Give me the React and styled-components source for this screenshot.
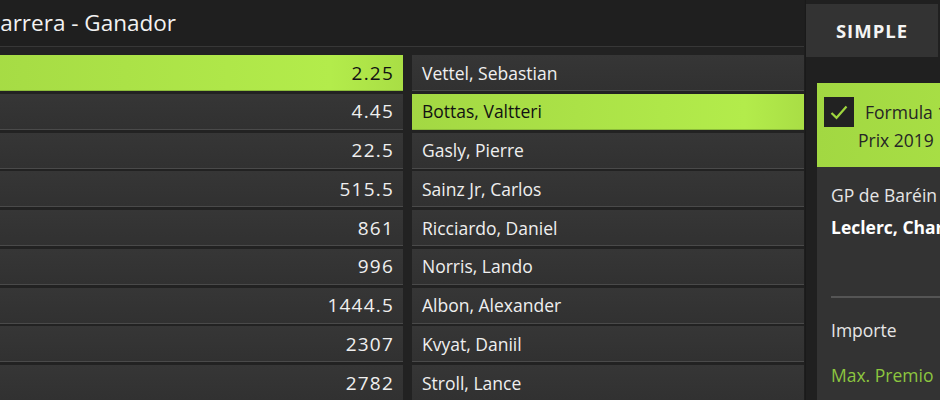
import React from "react";
import styled, { createGlobalStyle } from "styled-components";

const GlobalStyle = createGlobalStyle`
  html, body {
    margin: 0;
    padding: 0;
    background: #1e1e1e;
    overflow: hidden;
  }
  body {
    font-family: "Open Sans", "Noto Sans", sans-serif;
    color: #ededed;
  }
`;

const runners = [
  { odds: "2.25", name: "Vettel, Sebastian", oddsOn: true },
  { odds: "4.45", name: "Bottas, Valtteri", nameOn: true },
  { odds: "22.5", name: "Gasly, Pierre" },
  { odds: "515.5", name: "Sainz Jr, Carlos" },
  { odds: "861", name: "Ricciardo, Daniel" },
  { odds: "996", name: "Norris, Lando" },
  { odds: "1444.5", name: "Albon, Alexander" },
  { odds: "2307", name: "Kvyat, Daniil" },
  { odds: "2782", name: "Stroll, Lance" },
];

function App() {
  return (
    <>
      <GlobalStyle />
      <Page>
        <Market>
          <MarketHeader>
            <Title>Carrera - Ganador</Title>
          </MarketHeader>
          <Grid>
            {runners.map((r) => (
              <React.Fragment key={r.name}>
                <Cell $active={r.oddsOn} $odds>
                  {r.odds}
                </Cell>
                <Cell $active={r.nameOn}>{r.name}</Cell>
              </React.Fragment>
            ))}
          </Grid>
        </Market>
        <Sidebar>
          <Tabs>
            <Tab>SIMPLE</Tab>
            <Tab>MÚLTIPLE</Tab>
          </Tabs>
          <SlipArea>
            <BetCard>
              <BetHead>
                <Check>
                  <svg width="18" height="15" viewBox="0 0 18 15">
                    <path
                      d="M1.5 8 L6.5 12.8 L16.5 1.5"
                      fill="none"
                      stroke="#9fd63e"
                      strokeWidth="2.2"
                    />
                  </svg>
                </Check>
                <EventName>Formula 1 - Gran Prix 2019</EventName>
              </BetHead>
              <BetBody>
                <Market2>GP de Baréin</Market2>
                <Pick>Leclerc, Charles</Pick>
                <Divider />
                <Label>Importe</Label>
                <Premium>Max. Premio</Premium>
              </BetBody>
            </BetCard>
          </SlipArea>
        </Sidebar>
      </Page>
    </>
  );
}

const Page = styled.div`
  display: flex;
  align-items: flex-start;
  margin-left: -80px;
  width: 1200px;
  height: 400px;
`;

const Market = styled.section`
  width: 884px;
  flex: none;
  background: #222;
  height: 100%;
`;

const MarketHeader = styled.header`
  height: 47px;
  background: #1f1f1f;
  border-bottom: 1px solid #373737;
  display: flex;
  align-items: center;
  padding-left: 66px;
  box-sizing: border-box;
`;

const Title = styled.h2`
  margin: 0;
  font-size: 22.5px;
  font-weight: 400;
  color: #f2f2f2;
  position: relative;
  top: -1px;
`;

const Grid = styled.div`
  display: grid;
  grid-template-columns: 1fr 392px;
  column-gap: 9px;
  row-gap: 2.75px;
  padding-top: 8px;
`;

const Cell = styled.div`
  height: 36px;
  box-sizing: border-box;
  display: flex;
  align-items: center;
  justify-content: ${(p) => (p.$odds ? "flex-end" : "flex-start")};
  padding: 0 ${(p) => (p.$odds ? "9px" : "10px")};
  font-size: ${(p) => (p.$odds ? "19px" : "17.5px")};
  letter-spacing: ${(p) => (p.$odds ? "1.2px" : "0")};
  color: ${(p) => (p.$active ? "#121212" : "#efefef")};
  background: ${(p) =>
    p.$active
      ? "linear-gradient(90deg, #a3d843 0%, #b3ec4b 85%, #a9de45 100%)"
      : "linear-gradient(180deg, #363636, #313131)"};
  border-bottom: 1.5px solid ${(p) => (p.$active ? "#8cbc3a" : "#4a4a4a")};
`;

const Sidebar = styled.aside`
  flex: none;
  width: 300px;
  margin-left: 1px;
  height: 100%;
  background: #202020;
  border-left: 1px solid #1a1a1a;
  padding-top: 4px;
  box-sizing: border-box;
`;

const Tabs = styled.div`
  display: flex;
  gap: 3px;
`;

const Tab = styled.div`
  width: 132px;
  height: 53px;
  display: flex;
  align-items: center;
  justify-content: center;
  background: #333;
  color: #f4f4f4;
  font-weight: 700;
  font-size: 18.5px;
  letter-spacing: 1px;
`;

const SlipArea = styled.div`
  padding: 26px 0 0 11px;
`;

const BetCard = styled.div`
  background: #333;
  height: 320px;
`;

const BetHead = styled.div`
  background: linear-gradient(90deg, #a2d842, #aee648);
  height: 84px;
  padding: 14px 0 0 7px;
  box-sizing: border-box;
  display: flex;
  align-items: flex-start;
  gap: 4px;
`;

const Check = styled.div`
  width: 30px;
  height: 30px;
  flex: none;
  background: #222;
  display: flex;
  align-items: center;
  justify-content: center;
`;

const EventName = styled.div`
  font-size: 17.5px;
  line-height: 28px;
  color: #262626;
  text-indent: 7px;
  width: 160px;
  margin-top: 1px;
`;

const BetBody = styled.div`
  padding: 15px 0 0 14px;
`;

const Market2 = styled.div`
  font-size: 17.5px;
  color: #e6e6e6;
  line-height: 26px;
`;

const Pick = styled.div`
  font-size: 17.5px;
  font-weight: 700;
  color: #fff;
  line-height: 26px;
  margin-top: 6px;
`;

const Divider = styled.div`
  height: 1.5px;
  background: #555;
  margin-top: 56px;
`;

const Label = styled.div`
  font-size: 17.5px;
  color: #e6e6e6;
  line-height: 26px;
  margin-top: 19px;
`;

const Premium = styled.div`
  font-size: 17.5px;
  color: #8cc63f;
  line-height: 26px;
  margin-top: 19px;
`;

export default App;
